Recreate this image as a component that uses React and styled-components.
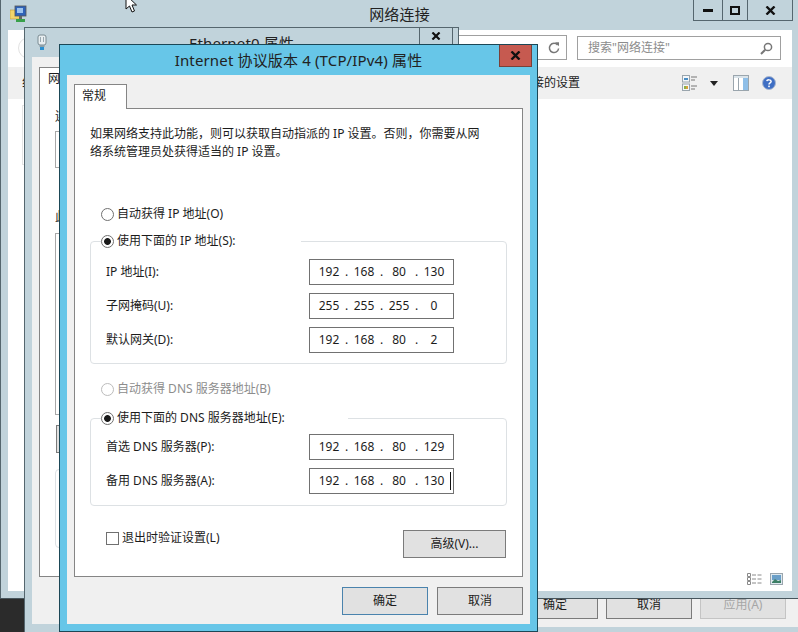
import React from 'react'
import styled, { createGlobalStyle } from 'styled-components'

const GlobalStyle = createGlobalStyle`
  html, body {
    margin: 0;
    padding: 0;
    background: #2b2b2b;
  }
`

const colors = {
  chrome: '#c1d3db',
  frame: '#55666e',
  face: '#f0f0f0',
  aero: '#67c6e8',
  text: '#1c1c1c',
  line: '#858585',
  soft: '#dde1e4',
}

const Desktop = styled.div`
  position: relative;
  width: 798px;
  height: 632px;
  overflow: hidden;
  background: #2b2b2b;
  color: ${colors.text};
  font-family: 'Noto Sans', 'Noto Sans CJK SC', sans-serif;
  font-size: 12px;
  line-height: 16px;
`

const Window = styled.div`
  position: absolute;
  box-sizing: border-box;
  display: flex;
  flex-direction: column;
  background: ${colors.chrome};
`

/* window that is left behind the explorer one, only its footer shows */
const StripWindow = styled(Window)`
  left: 400px;
  top: 560px;
  width: 398px;
  height: 72px;
`

const StripClient = styled.div`
  height: 67px;
  background: ${colors.face};
  display: flex;
  justify-content: flex-end;
  gap: 8px;
  padding: 31px 12px 0 0;
  box-sizing: border-box;
`

const ExplorerWindow = styled(Window)`
  left: 0;
  top: 0;
  width: 798px;
  height: 599px;
  border-left: 1px solid ${colors.frame};
  border-bottom: 1px solid #47555c;
`

const PropsWindow = styled(Window)`
  left: 24px;
  top: 27px;
  width: 435px;
  height: 605px;
  border: 1px solid ${colors.frame};
  border-bottom: 0;
`

const DialogWindow = styled(Window)`
  left: 59px;
  top: 44px;
  width: 479px;
  height: 588px;
  border: 1px solid #1b4756;
  background: ${colors.aero};
`

const TitleBar = styled.div`
  display: grid;
  grid-template-columns: 1fr auto 1fr;
  height: ${p => p.$height}px;
  flex: none;
  padding: 0 ${p => p.$right}px 0 ${p => p.$left || 0}px;
`

const TitleIcon = styled.div`
  padding: ${p => p.$pad};
`

const Title = styled.div`
  font-size: 15px;
  line-height: 20px;
  letter-spacing: 0.15px;
  padding-top: ${p => p.$top}px;
  white-space: nowrap;
  color: #222;
`

const CaptionRow = styled.div`
  justify-self: end;
  display: flex;
  height: ${p => p.$height}px;
  border: 1px solid ${colors.frame};
  border-top: 0;
  box-sizing: border-box;
`

const CaptionButton = styled.div`
  width: ${p => p.$width}px;
  display: flex;
  align-items: center;
  justify-content: center;
  & + & {
    border-left: 1px solid ${colors.frame};
  }
`

const DialogClose = styled.div`
  justify-self: end;
  box-sizing: border-box;
  width: 33px;
  height: 22px;
  background: #c65a50;
  border: 1px solid #7a4038;
  border-top: 0;
  display: flex;
  align-items: center;
  justify-content: center;
`

const ExplorerClient = styled.div`
  flex: 1;
  margin: 0 6px 7px 7px;
  background: #fff;
  display: flex;
  flex-direction: column;
  min-height: 0;
`

const AddressRow = styled.div`
  height: 37px;
  flex: none;
  display: flex;
  justify-content: space-between;
  align-items: flex-start;
  padding: 5px 11px 0 10px;
  box-sizing: border-box;
`

const BackCircle = styled.div`
  width: 20px;
  height: 20px;
  margin-top: 2px;
  border: 1px solid #e2e2e2;
  border-radius: 50%;
`

const AddressRight = styled.div`
  display: flex;
  gap: 10px;
`

const RefreshBox = styled.div`
  width: 300px;
  height: 25px;
  box-sizing: border-box;
  border: 1px solid #a0a0a0;
  display: flex;
  align-items: center;
  justify-content: flex-end;
  padding-right: 6px;
`

const SearchBox = styled.div`
  width: 204px;
  height: 24px;
  margin-top: 1px;
  box-sizing: border-box;
  border: 1px solid #a0a0a0;
  display: flex;
  align-items: center;
  justify-content: space-between;
  padding: 0 7px 0 10px;
  color: #8c8c8c;
`

const Toolbar = styled.div`
  height: 32px;
  flex: none;
  background: ${colors.face};
  display: flex;
  align-items: center;
  padding: 0 16px 0 14px;
  white-space: nowrap;
`

const ToolText = styled.span`
  width: ${p => p.$width}px;
`

const ToolIcons = styled.div`
  margin-left: auto;
  display: flex;
  align-items: center;
  gap: 12px;
`

const ListArea = styled.div`
  flex: 1;
  display: flex;
  flex-direction: column;
  justify-content: space-between;
  padding: 6px 9px 6px 14px;
`

const ListItemEdge = styled.div`
  width: 100px;
  height: 58px;
  border: 1px solid #e4e4e4;
`

const StatusIcons = styled.div`
  display: flex;
  justify-content: flex-end;
  align-items: center;
  gap: 8px;
`

const PropsClient = styled.div`
  flex: 1;
  background: ${colors.face};
  margin: 0 0 8px 7px;
  padding: 10px 0 47px 7px;
  display: flex;
`

const PropsPanel = styled.div`
  flex: 1;
  background: #fff;
  border: 1px solid ${colors.line};
  display: flex;
  flex-direction: column;
  align-items: flex-start;
  padding: 3px 0 0 15px;
`

const PropsTabLabel = styled.div`
  margin: 0 0 0 -7px;
`

const PropsLabel = styled.div`
  margin-top: ${p => p.$top}px;
`

const PropsBox = styled.div`
  width: 300px;
  height: ${p => p.$height}px;
  box-sizing: border-box;
  margin-top: ${p => p.$top}px;
  border: 1px solid ${p => p.$color || '#a8a8a8'};
  border-radius: ${p => p.$radius || 0}px;
`

const PropsButton = styled.div`
  width: 60px;
  height: 28px;
  margin: 10px 0 0 1px;
  box-sizing: border-box;
  background: #e1e1e1;
  border: 1px solid #7a7a7a;
`

const DialogClient = styled.div`
  flex: 1;
  margin: 0 7px 7px 7px;
  background: ${colors.face};
  padding: 9px 7px 0 7px;
  display: flex;
  flex-direction: column;
  min-height: 0;
`

const Tab = styled.div`
  align-self: flex-start;
  box-sizing: border-box;
  width: 53px;
  height: 25px;
  background: #fff;
  border: 1px solid ${colors.line};
  border-bottom: 0;
  padding: 3px 0 0 7px;
  margin-bottom: -1px;
  position: relative;
  z-index: 1;
`

const TabPanel = styled.div`
  box-sizing: border-box;
  height: 469px;
  flex: none;
  background: #fff;
  border: 1px solid ${colors.line};
  padding: 16px 15px 0 15px;
  display: flex;
  flex-direction: column;
`

const Intro = styled.p`
  margin: 0;
  line-height: 18px;
  width: 400px;
`

const RadioRow = styled.label`
  display: flex;
  align-items: center;
  gap: 3px;
  height: 16px;
  margin: ${p => p.$top || 0}px 0 0 11px;
  color: ${p => (p.$disabled ? '#8d8d8d' : 'inherit')};
  white-space: nowrap;
`

const RadioDot = styled.span`
  width: 13px;
  height: 13px;
  box-sizing: border-box;
  border-radius: 50%;
  border: 1px solid ${p => (p.$disabled ? '#bcbcbc' : '#707070')};
  background: ${p =>
    p.$checked ? 'radial-gradient(circle, #1a1a1a 0 3px, #fff 3.8px)' : '#fff'};
`

const GroupBox = styled.fieldset`
  margin: ${p => p.$top}px 0 0 0;
  padding: ${p => p.$pad};
  border: 1px solid ${colors.soft};
  border-radius: 4px;
  min-width: 0;
  display: flex;
  flex-direction: column;
  gap: 8px;
`

const GroupLegend = styled.legend`
  box-sizing: border-box;
  width: ${p => p.$width}px;
  padding: 0;
  margin: 0 0 0 -5px;
  background: #fff;
`

const GroupRadio = styled(RadioRow)`
  margin: 0;
`

const FieldRow = styled.div`
  display: flex;
  align-items: center;
  justify-content: space-between;
  height: 26px;
`

const IpInput = styled.div`
  position: relative;
  box-sizing: border-box;
  width: 145px;
  height: 26px;
  border: 1px solid #717171;
  padding-left: 5px;
  display: grid;
  grid-template-columns: 28px 7px 28px 7px 28px 7px 28px;
  align-items: center;
  justify-items: center;
  font-size: 12px;
  background: #fff;
`

const Caret = styled.span`
  position: absolute;
  left: 140px;
  top: 3px;
  width: 1px;
  height: 18px;
  background: #111;
`

const BottomRow = styled.div`
  display: flex;
  justify-content: space-between;
  align-items: flex-start;
  margin: 24px 0 0 16px;
  padding-right: 1px;
`

const CheckRow = styled.label`
  display: flex;
  align-items: center;
  gap: 3px;
  white-space: nowrap;
`

const CheckBox = styled.span`
  width: 13px;
  height: 13px;
  box-sizing: border-box;
  border: 1px solid #707070;
  background: #fff;
`

const Button = styled.button`
  box-sizing: border-box;
  width: ${p => p.$width || 86}px;
  height: 28px;
  padding: 0;
  background: #e1e1e1;
  border: 1px solid ${p => (p.$primary ? '#4a83ad' : p.$disabled ? '#c4c4c4' : '#7b7b7b')};
  color: ${p => (p.$disabled ? '#a6a6a6' : colors.text)};
  font-family: inherit;
  font-size: 12px;
  line-height: 16px;
`

const FooterRow = styled.div`
  display: flex;
  justify-content: flex-end;
  gap: 9px;
  padding-top: 10px;
`

const CursorMark = styled.svg`
  position: absolute;
  left: 125px;
  top: -6px;
`

const Xmark = ({ size = 9, width = 2.4 }) => (
  <svg width={size + 2} height={size} viewBox="0 0 11 9">
    <path d="M1.5 .5l8 8M9.5 .5l-8 8" stroke="#111" strokeWidth={width} fill="none" />
  </svg>
)

const NetworkIcon = () => (
  <svg width="17" height="18" viewBox="0 0 17 18">
    <path d="M0 5h6l1 1h3v8H0z" fill="#f2d56a" stroke="#b89a3a" strokeWidth=".6" />
    <rect x="5" y="1" width="11" height="10" fill="#2e62b8" stroke="#555" strokeWidth=".8" />
    <rect x="7" y="3" width="6" height="5" fill="#9cc3ee" />
    <path d="M9 11h3v3H9z" fill="#666" />
    <path d="M6 14h9v3H6z" fill="#38a04a" />
  </svg>
)

const AdapterIcon = () => (
  <svg width="10" height="17" viewBox="0 0 10 17">
    <rect x="1" y="1" width="8" height="10" rx="2" fill="#e8eef1" stroke="#7b8b92" />
    <path d="M3.5 3v5M6.5 3v5" stroke="#9aa9b0" />
    <rect x="2.5" y="11" width="5" height="2" fill="#8fa0a8" />
    <rect x="3" y="13" width="4" height="3" fill="#2a8fd0" />
  </svg>
)

const RefreshIcon = () => (
  <svg width="12" height="12" viewBox="0 0 12 12">
    <path d="M9.6 3A4.6 4.6 0 1 0 10.6 6.5" stroke="#777" strokeWidth="1.5" fill="none" />
    <path d="M7 .3h4v4z" fill="#777" />
  </svg>
)

const SearchIcon = () => (
  <svg width="13" height="13" viewBox="0 0 13 13">
    <circle cx="8" cy="5" r="3.6" stroke="#777" strokeWidth="1.5" fill="none" />
    <path d="M5.2 7.8L1 12" stroke="#777" strokeWidth="2" />
  </svg>
)

const ViewIcon = () => (
  <svg width="16" height="16" viewBox="0 0 16 16">
    <rect x=".5" y=".5" width="7" height="6.5" fill="#f4f7fa" stroke="#9aa5ad" />
    <path d="M2 3h4v2H2z" fill="#4a8ec4" />
    <rect x=".5" y="9" width="7" height="6.5" fill="#f4f7fa" stroke="#9aa5ad" />
    <path d="M2 11h2v3H2z" fill="#8bb04a" />
    <path d="M4 11h2v3H4z" fill="#d8a13c" />
    <path d="M9 2h6M9 5h4M9 11h6M9 14h4" stroke="#777" />
  </svg>
)

const DropCaret = () => (
  <svg width="11" height="5" viewBox="0 0 11 5">
    <path d="M0 0h8L4 5z" fill="#222" />
  </svg>
)

const PaneIcon = () => (
  <svg width="17" height="16" viewBox="0 0 17 16">
    <rect x=".5" y=".5" width="15" height="15" fill="#fff" stroke="#9aa5ad" />
    <rect x="1" y="1" width="14" height="2" fill="#dbe4ea" />
    <path d="M5.5 3v12" stroke="#9aa5ad" />
    <rect x="10" y="3" width="5" height="12" fill="#8fbfe8" />
  </svg>
)

const HelpIcon = () => (
  <svg width="14" height="14" viewBox="0 0 14 14">
    <circle cx="7" cy="7" r="6.5" fill="#3f6fc4" stroke="#a9b8cf" />
    <path d="M4.8 5.2C5 3.4 9 3.4 9.1 5.4 9.1 7 7 6.8 7 8.6" stroke="#fff" strokeWidth="1.5" fill="none" />
    <rect x="6.2" y="9.6" width="1.6" height="1.6" fill="#fff" />
  </svg>
)

const DetailsIcon = () => (
  <svg width="15" height="12" viewBox="0 0 15 12">
    <path d="M.5.5h3v3h-3zM.5 4.5h3v3h-3zM.5 8.5h3v3h-3z" fill="#fff" stroke="#8a8a8a" />
    <path d="M5 2h4M10.500 2h4M5 6h4M10.500 6h4M5 10h4M10.500 10h4" stroke="#8a8a8a" />
  </svg>
)

const PreviewIcon = () => (
  <svg width="13" height="12" viewBox="0 0 13 12">
    <rect x=".5" y=".5" width="12" height="11" fill="#dfe9ef" stroke="#9aa5ad" />
    <rect x="2" y="2" width="9" height="5" fill="#6a9fc8" />
    <path d="M2 9l3-3 3 2 3-1v3H2z" fill="#3d7f66" />
  </svg>
)

const Ip = ({ value, caret }) => {
  const parts = value.split('.')
  return (
    <IpInput>
      {parts.map((part, i) => (
        <React.Fragment key={i}>
          <span>{part}</span>
          {i < 3 && <span>.</span>}
        </React.Fragment>
      ))}
      {caret && <Caret />}
    </IpInput>
  )
}

export default function App() {
  return (
    <>
      <GlobalStyle />
      <Desktop>
        <StripWindow>
          <StripClient>
            <Button $width={86}>确定</Button>
            <Button $width={86}>取消</Button>
            <Button $width={86} $disabled>应用(A)</Button>
          </StripClient>
        </StripWindow>

        <ExplorerWindow>
          <TitleBar $height={30} $right={5} $left={5}>
            <TitleIcon $pad="5px 0 0 4px"><NetworkIcon /></TitleIcon>
            <Title $top={4}>网络连接</Title>
            <CaptionRow $height={21}>
              <CaptionButton $width={28}>
                <svg width="10" height="3"><rect width="10" height="3" fill="#111" /></svg>
              </CaptionButton>
              <CaptionButton $width={24}>
                <svg width="10" height="9"><rect x="1" y="1" width="8" height="7" fill="none" stroke="#111" strokeWidth="2" /></svg>
              </CaptionButton>
              <CaptionButton $width={44}><Xmark /></CaptionButton>
            </CaptionRow>
          </TitleBar>
          <ExplorerClient>
            <AddressRow>
              <BackCircle />
              <AddressRight>
                <RefreshBox><RefreshIcon /></RefreshBox>
                <SearchBox>
                  <span>搜索"网络连接"</span>
                  <SearchIcon />
                </SearchBox>
              </AddressRight>
            </AddressRow>
            <Toolbar>
              <ToolText $width={462}>组织</ToolText>
              <ToolText>更改此连接的设置</ToolText>
              <ToolIcons>
                <ViewIcon />
                <DropCaret />
                <PaneIcon />
                <HelpIcon />
              </ToolIcons>
            </Toolbar>
            <ListArea>
              <ListItemEdge />
              <StatusIcons>
                <DetailsIcon />
                <PreviewIcon />
              </StatusIcons>
            </ListArea>
          </ExplorerClient>
        </ExplorerWindow>

        <PropsWindow>
          <TitleBar $height={29} $right={5} $left={5}>
            <TitleIcon $pad="6px 0 0 7px"><AdapterIcon /></TitleIcon>
            <Title $top={5}>Ethernet0 属性</Title>
            <CaptionRow $height={17}>
              <CaptionButton $width={32}><Xmark size={8} /></CaptionButton>
            </CaptionRow>
          </TitleBar>
          <PropsClient>
            <PropsPanel>
              <PropsTabLabel>网络</PropsTabLabel>
              <PropsLabel $top={22}>连接时使用:</PropsLabel>
              <PropsBox $height={37} $top={6} />
              <PropsLabel $top={41}>此连接使用下列项目(O):</PropsLabel>
              <PropsBox $height={182} $top={8} />
              <PropsButton />
              <PropsBox $height={79} $top={16} $color={colors.soft} $radius={4} />
            </PropsPanel>
          </PropsClient>
        </PropsWindow>

        <DialogWindow>
          <TitleBar $height={30} $right={5} $left={5}>
            <span />
            <Title $top={5}>Internet 协议版本 4 (TCP/IPv4) 属性</Title>
            <DialogClose><Xmark size={9} /></DialogClose>
          </TitleBar>
          <DialogClient>
            <Tab>常规</Tab>
            <TabPanel>
              <Intro>如果网络支持此功能，则可以获取自动指派的 IP 设置。否则，你需要从网络系统管理员处获得适当的 IP 设置。</Intro>

              <RadioRow $top={45}>
                <RadioDot />
                自动获得 IP 地址(O)
              </RadioRow>

              <GroupBox $top={11} $pad="10px 52px 10px 15px">
                <GroupLegend $width={200}>
                  <GroupRadio>
                    <RadioDot $checked />
                    使用下面的 IP 地址(S):
                  </GroupRadio>
                </GroupLegend>
                <FieldRow>
                  IP 地址(I):
                  <Ip value="192.168.80.130" />
                </FieldRow>
                <FieldRow>
                  子网掩码(U):
                  <Ip value="255.255.255.0" />
                </FieldRow>
                <FieldRow>
                  默认网关(D):
                  <Ip value="192.168.80.2" />
                </FieldRow>
              </GroupBox>

              <RadioRow $top={17} $disabled>
                <RadioDot $disabled />
                自动获得 DNS 服务器地址(B)
              </RadioRow>

              <GroupBox $top={13} $pad="8px 52px 11px 15px">
                <GroupLegend $width={247}>
                  <GroupRadio>
                    <RadioDot $checked />
                    使用下面的 DNS 服务器地址(E):
                  </GroupRadio>
                </GroupLegend>
                <FieldRow>
                  首选 DNS 服务器(P):
                  <Ip value="192.168.80.129" />
                </FieldRow>
                <FieldRow>
                  备用 DNS 服务器(A):
                  <Ip value="192.168.80.130" caret />
                </FieldRow>
              </GroupBox>

              <BottomRow>
                <CheckRow>
                  <CheckBox />
                  退出时验证设置(L)
                </CheckRow>
                <Button $width={103}>高级(V)...</Button>
              </BottomRow>
            </TabPanel>
            <FooterRow>
              <Button $primary>确定</Button>
              <Button>取消</Button>
            </FooterRow>
          </DialogClient>
        </DialogWindow>

        <CursorMark width="14" height="20" viewBox="0 0 14 20">
          <path d="M1 1v14l3.500-3 2.500 6 2.500-1-2.500-6h4.500z" fill="#fff" stroke="#111" />
        </CursorMark>
      </Desktop>
    </>
  )
}
